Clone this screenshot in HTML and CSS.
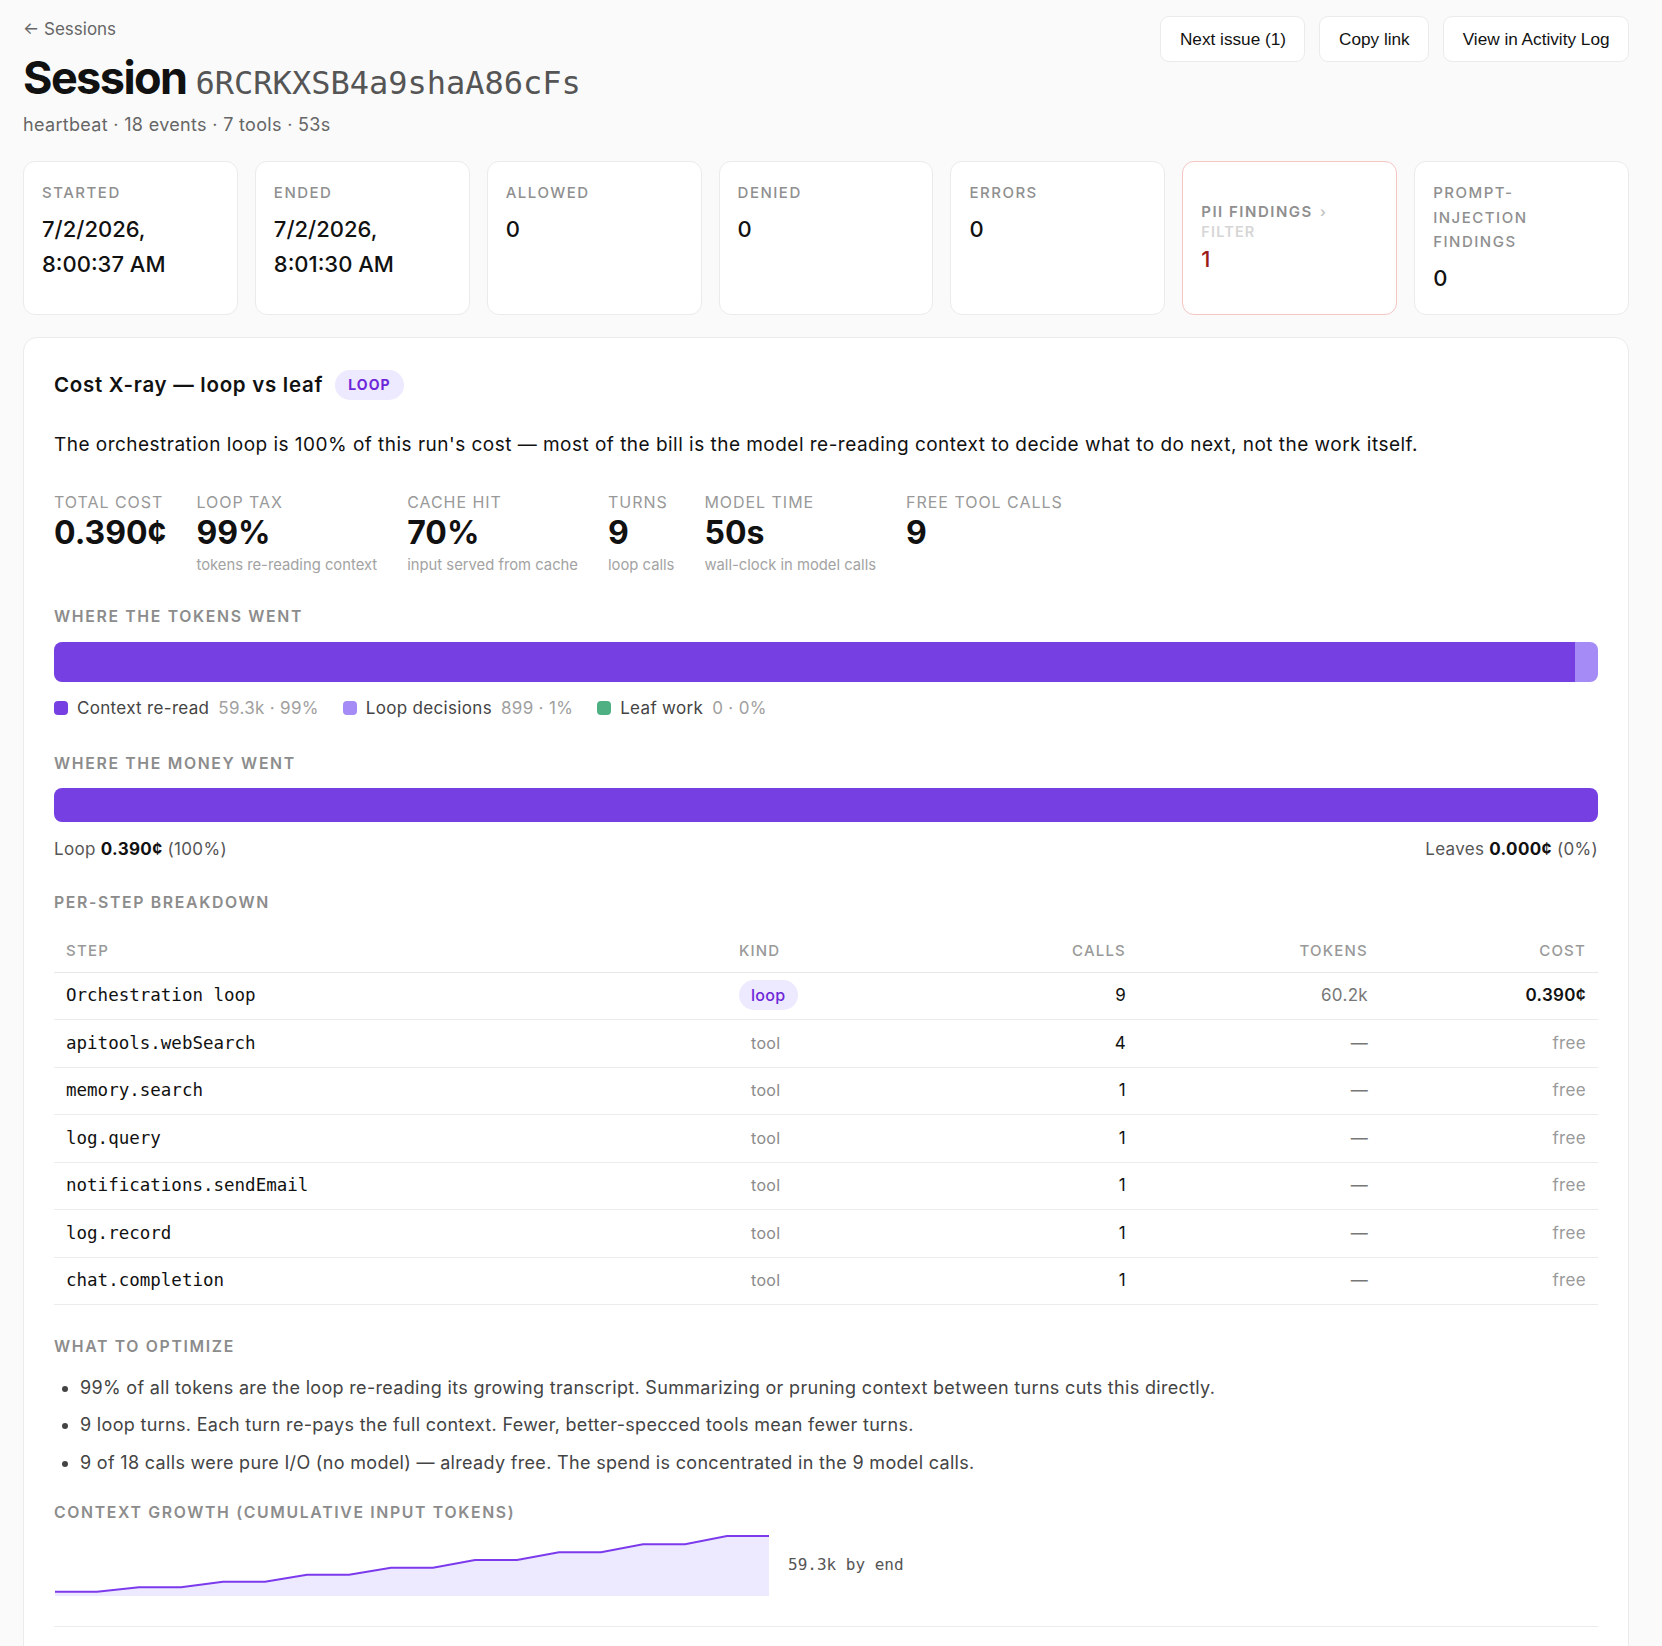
FILE: index.html
```html
<!DOCTYPE html>
<html lang="en">
<head>
    <meta charset="UTF-8">
    <meta name="viewport" content="width=device-width, initial-scale=1.0">
    <title>Session 6RCRKXSB4a9shaA86cFs</title>
    <link rel="stylesheet" href="styles.css">
</head>
<body>
    <div class="page">
        <header class="page-header">
            <div class="title-block">
                <a class="back-link" href="#">&larr; Sessions</a>
                <h1 class="session-title">Session <span class="session-id">6RCRKXSB4a9shaA86cFs</span></h1>
                <p class="session-meta">heartbeat · 18 events · 7 tools · 53s</p>
            </div>
            <div class="header-actions">
                <button class="action-btn">Next issue (1)</button>
                <button class="action-btn">Copy link</button>
                <button class="action-btn">View in Activity Log</button>
            </div>
        </header>

        <section class="stat-grid">
            <div class="stat-card">
                <div class="stat-label">Started</div>
                <div class="stat-value">7/2/2026, 8:00:37 AM</div>
            </div>
            <div class="stat-card">
                <div class="stat-label">Ended</div>
                <div class="stat-value">7/2/2026, 8:01:30 AM</div>
            </div>
            <div class="stat-card">
                <div class="stat-label">Allowed</div>
                <div class="stat-value">0</div>
            </div>
            <div class="stat-card">
                <div class="stat-label">Denied</div>
                <div class="stat-value">0</div>
            </div>
            <div class="stat-card">
                <div class="stat-label">Errors</div>
                <div class="stat-value">0</div>
            </div>
            <div class="stat-card stat-card-alert">
                <div class="stat-label stat-label-strong">PII findings <span class="stat-chevron">&rsaquo;</span></div>
                <div class="stat-filter">Filter</div>
                <div class="stat-value stat-value-alert">1</div>
            </div>
            <div class="stat-card">
                <div class="stat-label">Prompt-<br>injection findings</div>
                <div class="stat-value">0</div>
            </div>
        </section>

        <section class="xray-card">
            <div class="xray-head">
                <h2>Cost X-ray — loop vs leaf</h2>
                <span class="tag-loop">LOOP</span>
            </div>
            <p class="xray-summary">The orchestration loop is 100% of this run's cost — most of the bill is the model re-reading context to decide what to do next, not the work itself.</p>

            <div class="metrics">
                <div class="metric">
                    <div class="metric-label">Total cost</div>
                    <div class="metric-value">0.390¢</div>
                </div>
                <div class="metric">
                    <div class="metric-label">Loop tax</div>
                    <div class="metric-value">99%</div>
                    <div class="metric-sub">tokens re-reading context</div>
                </div>
                <div class="metric">
                    <div class="metric-label">Cache hit</div>
                    <div class="metric-value">70%</div>
                    <div class="metric-sub">input served from cache</div>
                </div>
                <div class="metric">
                    <div class="metric-label">Turns</div>
                    <div class="metric-value">9</div>
                    <div class="metric-sub">loop calls</div>
                </div>
                <div class="metric">
                    <div class="metric-label">Model time</div>
                    <div class="metric-value">50s</div>
                    <div class="metric-sub">wall-clock in model calls</div>
                </div>
                <div class="metric">
                    <div class="metric-label">Free tool calls</div>
                    <div class="metric-value">9</div>
                </div>
            </div>

            <h3 class="section-title">Where the tokens went</h3>
            <div class="split-bar token-bar">
                <div class="seg seg-context" style="width: 98.5%"></div>
                <div class="seg seg-decide" style="width: 1.5%"></div>
            </div>
            <div class="legend">
                <span class="legend-item"><i class="dot dot-context"></i>Context re-read <em>59.3k · 99%</em></span>
                <span class="legend-item"><i class="dot dot-decide"></i>Loop decisions <em>899 · 1%</em></span>
                <span class="legend-item"><i class="dot dot-leaf"></i>Leaf work <em>0 · 0%</em></span>
            </div>

            <h3 class="section-title section-money">Where the money went</h3>
            <div class="split-bar money-bar">
                <div class="seg seg-context" style="width: 100%"></div>
            </div>
            <div class="money-labels">
                <span>Loop <b>0.390¢</b> (100%)</span>
                <span>Leaves <b>0.000¢</b> (0%)</span>
            </div>

            <h3 class="section-title">Per-step breakdown</h3>
            <table class="steps">
                <colgroup>
                    <col style="width: 673px">
                    <col style="width: 200px">
                    <col style="width: 211px">
                    <col style="width: 242px">
                    <col>
                </colgroup>
                <thead>
                    <tr>
                        <th>Step</th>
                        <th>Kind</th>
                        <th class="num">Calls</th>
                        <th class="num">Tokens</th>
                        <th class="num">Cost</th>
                    </tr>
                </thead>
                <tbody>
                    <tr>
                        <td class="step">Orchestration loop</td>
                        <td><span class="kind kind-loop">loop</span></td>
                        <td class="num">9</td>
                        <td class="num muted">60.2k</td>
                        <td class="num cost">0.390¢</td>
                    </tr>
                    <tr>
                        <td class="step">apitools.webSearch</td>
                        <td><span class="kind kind-tool">tool</span></td>
                        <td class="num">4</td>
                        <td class="num muted">—</td>
                        <td class="num free">free</td>
                    </tr>
                    <tr>
                        <td class="step">memory.search</td>
                        <td><span class="kind kind-tool">tool</span></td>
                        <td class="num">1</td>
                        <td class="num muted">—</td>
                        <td class="num free">free</td>
                    </tr>
                    <tr>
                        <td class="step">log.query</td>
                        <td><span class="kind kind-tool">tool</span></td>
                        <td class="num">1</td>
                        <td class="num muted">—</td>
                        <td class="num free">free</td>
                    </tr>
                    <tr>
                        <td class="step">notifications.sendEmail</td>
                        <td><span class="kind kind-tool">tool</span></td>
                        <td class="num">1</td>
                        <td class="num muted">—</td>
                        <td class="num free">free</td>
                    </tr>
                    <tr>
                        <td class="step">log.record</td>
                        <td><span class="kind kind-tool">tool</span></td>
                        <td class="num">1</td>
                        <td class="num muted">—</td>
                        <td class="num free">free</td>
                    </tr>
                    <tr>
                        <td class="step">chat.completion</td>
                        <td><span class="kind kind-tool">tool</span></td>
                        <td class="num">1</td>
                        <td class="num muted">—</td>
                        <td class="num free">free</td>
                    </tr>
                </tbody>
            </table>

            <h3 class="section-title">What to optimize</h3>
            <ul class="advice">
                <li>99% of all tokens are the loop re-reading its growing transcript. Summarizing or pruning context between turns cuts this directly.</li>
                <li>9 loop turns. Each turn re-pays the full context. Fewer, better-specced tools mean fewer turns.</li>
                <li>9 of 18 calls were pure I/O (no model) — already free. The spend is concentrated in the 9 model calls.</li>
            </ul>

            <h3 class="section-title section-growth">Context growth (cumulative input tokens)</h3>
            <div class="growth">
                <svg class="growth-chart" width="716" height="62" viewBox="0 0 716 62">
                    <polygon class="growth-fill" points="1,57.7 43,57.7 85,53.3 127,53.3 169,47.7 211,47.7 253,40.7 295,40.7 337,33.7 379,33.7 421,26 463,26 505,18.3 547,18.3 589,10.3 631,10.3 673,2 715,2 715,62 1,62"/>
                    <polyline class="growth-line" points="1,57.7 43,57.7 85,53.3 127,53.3 169,47.7 211,47.7 253,40.7 295,40.7 337,33.7 379,33.7 421,26 463,26 505,18.3 547,18.3 589,10.3 631,10.3 673,2 715,2"/>
                </svg>
                <span class="growth-note">59.3k by end</span>
            </div>

            <div class="xray-foot"></div>
        </section>
    </div>
</body>
</html>
```

FILE: styles.css
```css
:root {
    --bg: #fafafa;
    --card: #ffffff;
    --border: #ebebeb;
    --text: #111111;
    --muted: #666666;
    --faint: #999999;
    --violet: #753fe2;
    --violet-soft: #a48bf5;
    --violet-tint: #ede9fe;
    --violet-ink: #6d28d9;
    --green: #4fb183;
    --danger: #991b1b;
}

* {
    margin: 0;
    padding: 0;
    box-sizing: border-box;
}

body {
    font-family: Inter, "Noto Sans", sans-serif;
    letter-spacing: 0.02em;
    background-color: var(--bg);
    color: var(--text);
}

.page {
    padding: 16px 33px 0 23px;
}

/* header */

.page-header {
    display: flex;
    justify-content: space-between;
    align-items: flex-start;
}

.back-link {
    display: block;
    font-size: 17px;
    line-height: 27px;
    letter-spacing: 0;
    color: var(--muted);
    text-decoration: none;
}

.session-title {
    margin-top: 7px;
    font-size: 45px;
    line-height: 55px;
    font-weight: 700;
    letter-spacing: -0.035em;
}

.session-id {
    font-family: "DejaVu Sans Mono", monospace;
    font-size: 32px;
    font-weight: 400;
    letter-spacing: 0;
    color: #555;
}

.session-meta {
    margin-top: 1px;
    font-size: 18px;
    line-height: 26px;
    color: var(--muted);
}

.header-actions {
    display: flex;
    gap: 14px;
}

.action-btn {
    font-family: "Liberation Sans", Arial, sans-serif;
    font-size: 17.2px;
    line-height: 20px;
    padding: 12px 18.5px;
    color: var(--text);
    background-color: var(--card);
    border: 1px solid var(--border);
    border-radius: 9px;
    cursor: pointer;
}

/* stat cards */

.stat-grid {
    margin-top: 23px;
    display: grid;
    grid-template-columns: repeat(7, 1fr);
    gap: 17px;
}

.stat-card {
    background-color: var(--card);
    border: 1px solid var(--border);
    border-radius: 12px;
    padding: 19px 18px 18px;
}

.stat-card-alert {
    border-color: #f5c6c2;
    display: flex;
    flex-direction: column;
    justify-content: center;
    padding-top: 22px;
}

.stat-label {
    font-size: 15px;
    line-height: 24.5px;
    font-weight: 500;
    letter-spacing: 0.1em;
    text-transform: uppercase;
    color: #8f8f8f;
}

.stat-label-strong {
    font-weight: 600;
    line-height: 20px;
}

.stat-chevron {
    color: #c4c4c4;
    font-size: 14px;
    margin-left: 2px;
}

.stat-filter {
    font-size: 14.5px;
    line-height: 20px;
    font-weight: 600;
    letter-spacing: 0.08em;
    text-transform: uppercase;
    color: #d6d6d6;
}

.stat-value {
    margin-top: 6px;
    font-size: 22px;
    line-height: 35px;
    font-weight: 500;
    letter-spacing: 0;
}

.stat-value-alert {
    margin-top: 0;
    color: var(--danger);
}

/* cost x-ray */

.xray-card {
    margin-top: 22px;
    background-color: var(--card);
    border: 1px solid var(--border);
    border-radius: 14px;
    padding: 32px 30px 0;
}

.xray-head {
    display: flex;
    align-items: center;
    gap: 12px;
    height: 30px;
}

.xray-head h2 {
    font-size: 20.5px;
    font-weight: 600;
    letter-spacing: 0.035em;
}

.tag-loop {
    display: inline-flex;
    align-items: center;
    height: 30px;
    padding: 0 13px;
    border-radius: 999px;
    background-color: var(--violet-tint);
    color: var(--violet-ink);
    font-size: 14px;
    font-weight: 700;
    letter-spacing: 0.08em;
}

.xray-summary {
    margin-top: 31px;
    font-size: 19px;
    line-height: 28px;
    letter-spacing: 0.025em;
}

.metrics {
    margin-top: 33px;
    display: flex;
    gap: 30px;
}

.metric-label {
    font-size: 16px;
    line-height: 20px;
    letter-spacing: 0.06em;
    text-transform: uppercase;
    color: #999;
}

.metric-value {
    margin-top: 2px;
    font-size: 32px;
    line-height: 38px;
    font-weight: 700;
    letter-spacing: 0;
}

.metric-sub {
    margin-top: 3px;
    font-size: 14.8px;
    line-height: 20px;
    letter-spacing: 0;
    color: #a3a3a3;
}

.section-title {
    margin-top: 32px;
    font-size: 15.8px;
    line-height: 20px;
    font-weight: 600;
    letter-spacing: 0.105em;
    text-transform: uppercase;
    color: #8c8c8c;
}

.section-money {
    margin-top: 34px;
}

.section-growth {
    margin-top: 26px;
}

.split-bar {
    display: flex;
    margin-top: 15px;
    border-radius: 8px;
    overflow: hidden;
}

.token-bar {
    height: 40px;
}

.money-bar {
    height: 34px;
    margin-top: 14px;
}

.seg-context {
    background-color: var(--violet);
}

.seg-decide {
    background-color: var(--violet-soft);
}

.legend {
    margin-top: 14px;
    display: flex;
    gap: 24px;
    font-size: 17px;
    line-height: 24px;
    color: #444;
}

.legend-item {
    display: flex;
    align-items: center;
}

.legend-item em {
    font-style: normal;
    color: #a0a0a0;
    margin-left: 9px;
}

.dot {
    width: 14px;
    height: 14px;
    border-radius: 4px;
    margin-right: 9px;
}

.dot-context {
    background-color: var(--violet);
}

.dot-decide {
    background-color: var(--violet-soft);
}

.dot-leaf {
    background-color: var(--green);
}

.money-labels {
    margin-top: 15px;
    display: flex;
    justify-content: space-between;
    font-size: 17px;
    line-height: 24px;
    color: #555;
}

.money-labels b {
    color: var(--text);
    font-weight: 700;
}

/* steps table */

.steps {
    width: 100%;
    margin-top: 15px;
    border-collapse: collapse;
    table-layout: fixed;
}

.steps th {
    padding: 12px 12px 10px;
    font-size: 15px;
    line-height: 22px;
    font-weight: 500;
    letter-spacing: 0.08em;
    text-transform: uppercase;
    text-align: left;
    color: #999;
    border-bottom: 1px solid #e8e8e8;
}

.steps td {
    padding: 11.5px 12px;
    font-size: 17px;
    line-height: 23.5px;
    border-bottom: 1px solid #ececec;
}

.steps .num {
    text-align: right;
}

.steps .step {
    font-family: "DejaVu Sans Mono", monospace;
    font-size: 17.5px;
    letter-spacing: 0;
}

.steps .muted {
    color: #777;
}

.steps .cost {
    font-weight: 600;
}

.steps .free {
    color: #9a9a9a;
}

.kind {
    padding: 5px 12px;
    border-radius: 999px;
    font-size: 16px;
}

.kind-loop {
    background-color: var(--violet-tint);
    color: var(--violet-ink);
    font-weight: 500;
}

.kind-tool {
    color: #8a8a8a;
}

/* optimize */

.advice {
    margin: 16.5px 0 0;
    padding-left: 26px;
    font-size: 18px;
    line-height: 28px;
    color: #444;
}

.advice li + li {
    margin-top: 9.6px;
}

.growth {
    margin-top: 11px;
    display: flex;
    align-items: center;
    gap: 18px;
}

.growth-chart {
    display: block;
}

.growth-fill {
    fill: var(--violet-tint);
}

.growth-line {
    fill: none;
    stroke: #7c3aed;
    stroke-width: 2;
}

.growth-note {
    font-family: "DejaVu Sans Mono", monospace;
    font-size: 16px;
    letter-spacing: 0;
    color: #555;
}

.xray-foot {
    margin-top: 30px;
    height: 60px;
    border-top: 1px solid #ececec;
}
```
